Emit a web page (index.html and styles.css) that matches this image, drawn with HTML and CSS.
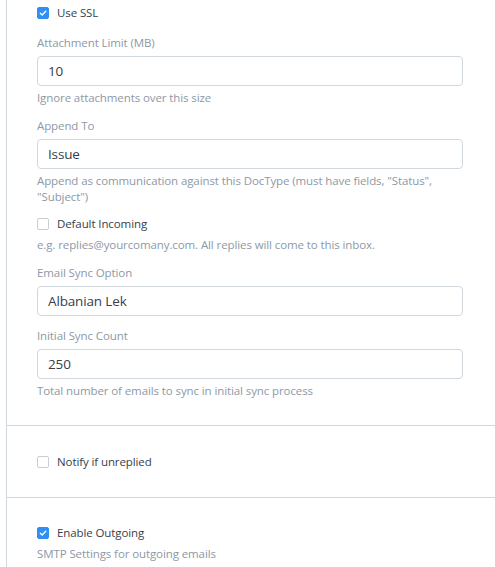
FILE: index.html
```html
<!DOCTYPE html>
<html>
<head>
<meta charset="utf-8">
<link rel="stylesheet" href="styles.css">
</head>
<body>
<div class="page">
  <div class="section first">
    <div class="check-row">
      <span class="cb checked"><svg viewBox="0 0 12 12" width="12" height="12"><path d="M2.8 6.2 L5 8.3 L9.3 3.8" fill="none" stroke="#fff" stroke-width="1.7" stroke-linecap="round" stroke-linejoin="round"/></svg></span>
      <span class="cb-label">Use SSL</span>
    </div>
    <div class="group lead">
      <div class="label">Attachment Limit (MB)</div>
      <div class="input">10</div>
      <div class="help">Ignore attachments over this size</div>
    </div>
    <div class="group">
      <div class="label">Append To</div>
      <div class="input">Issue</div>
      <div class="help">Append as communication against this DocType (must have fields, "Status", "Subject")</div>
    </div>
    <div class="group check-group">
      <div class="check-row">
        <span class="cb"></span>
        <span class="cb-label">Default Incoming</span>
      </div>
      <div class="help">e.g. replies@yourcomany.com. All replies will come to this inbox.</div>
    </div>
    <div class="group">
      <div class="label">Email Sync Option</div>
      <div class="input">Albanian Lek</div>
    </div>
    <div class="group">
      <div class="label">Initial Sync Count</div>
      <div class="input">250</div>
      <div class="help">Total number of emails to sync in initial sync process</div>
    </div>
  </div>
  <div class="section second">
    <div class="check-row">
      <span class="cb"></span>
      <span class="cb-label">Notify if unreplied</span>
    </div>
  </div>
  <div class="section third">
    <div class="check-row">
      <span class="cb checked"><svg viewBox="0 0 12 12" width="12" height="12"><path d="M2.8 6.2 L5 8.3 L9.3 3.8" fill="none" stroke="#fff" stroke-width="1.7" stroke-linecap="round" stroke-linejoin="round"/></svg></span>
      <span class="cb-label">Enable Outgoing</span>
    </div>
    <div class="help">SMTP Settings for outgoing emails</div>
  </div>
</div>
</body>
</html>
```
FILE: styles.css
```css
html, body {
  margin: 0;
  padding: 0;
  background: #fff;
}
body {
  font-family: "Open Sans", "Noto Sans", sans-serif;
  color: #36414c;
  overflow: hidden;
}
.page {
  margin-left: 6px;
  border-left: 1px solid #d1d8dd;
  min-height: 567px;
}
.section {
  padding: 0 32px 0 30px;
  border-bottom: 1px solid #d1d8dd;
}
.section.first {
  padding-top: 4px;
  padding-bottom: 26px;
}
.section.second {
  padding-top: 27px;
  padding-bottom: 26px;
}
.section.third {
  padding-top: 26px;
  border-bottom: none;
}
.group {
  margin-top: 11px;
}
.group.lead {
  margin-top: 12px;
}
.group.check-group {
  margin-top: 10px;
}
.check-row {
  display: flex;
  align-items: center;
  height: 18px;
}
.cb {
  box-sizing: border-box;
  width: 12px;
  height: 12px;
  border: 1px solid #c8ced3;
  border-radius: 2px;
  display: inline-flex;
  align-items: center;
  justify-content: center;
  margin-right: 8px;
  background: #fff;
}
.cb.checked {
  background: #2f8ff3;
  border-color: #2f8ff3;
}
.cb svg {
  display: block;
}
.cb-label {
  font-size: 11.5px;
  letter-spacing: -0.1px;
  line-height: 18px;
  color: #36414c;
}
.label {
  font-size: 11.5px;
  letter-spacing: -0.1px;
  line-height: 18px;
  color: #8d99a6;
  margin-bottom: 4px;
}
.input {
  box-sizing: border-box;
  height: 30px;
  border: 1px solid #d1d8dd;
  border-radius: 4px;
  padding: 0 10px;
  font-size: 13.5px;
  letter-spacing: -0.15px;
  line-height: 28px;
  color: #36414c;
}
.help {
  font-size: 11.5px;
  letter-spacing: -0.1px;
  line-height: 16px;
  color: #8d99a6;
  margin-top: 4px;
}
```
